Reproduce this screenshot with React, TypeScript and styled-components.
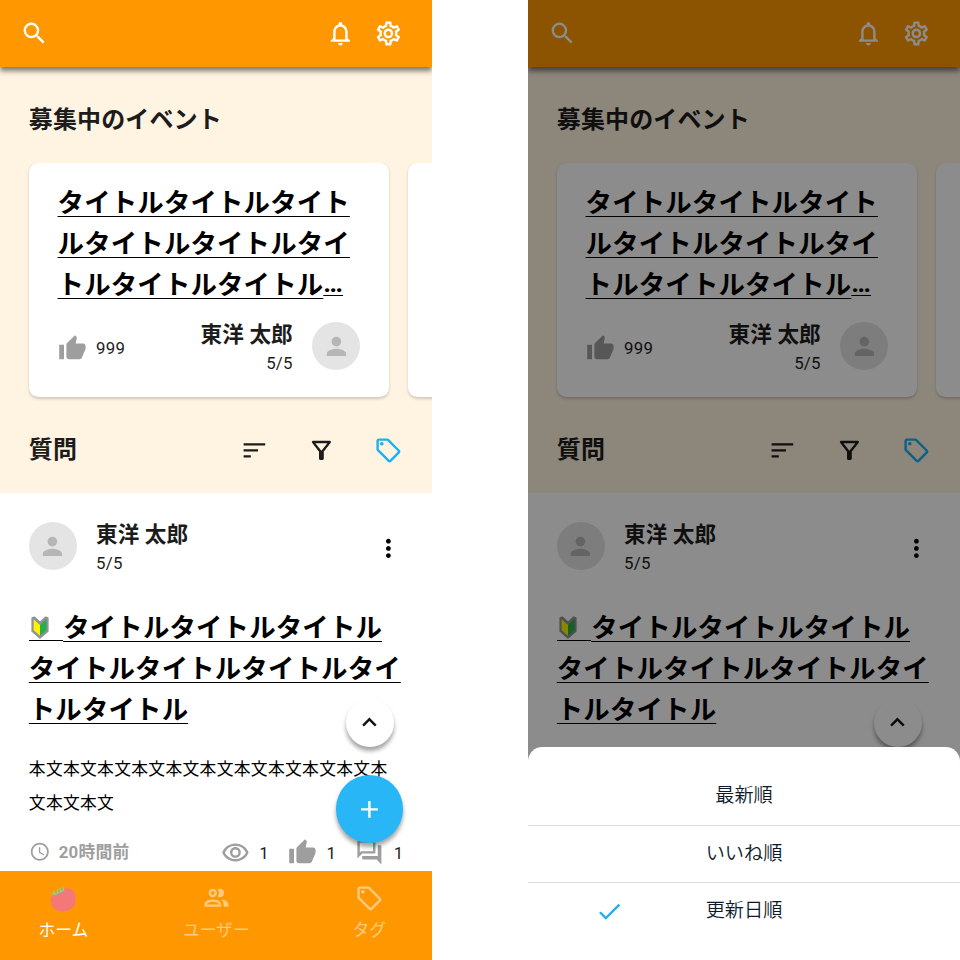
import React from 'react';
import styled, { createGlobalStyle } from 'styled-components';
import {
  MdSearch,
  MdNotificationsNone,
  MdOutlineSettings,
  MdThumbUp,
  MdPerson,
  MdSort,
  MdOutlineFilterAlt,
  MdMoreVert,
  MdAccessTime,
  MdOutlineRemoveRedEye,
  MdOutlineForum,
  MdKeyboardArrowUp,
  MdAdd,
  MdCheck,
} from 'react-icons/md';

const ICON = 28.8;

const GlobalStyle = createGlobalStyle`
  * { box-sizing: border-box; }
  body {
    margin: 0;
    background: #fff;
    font-family: Roboto, "Noto Sans CJK JP", sans-serif;
    color: #1c1c1c;
  }
  svg { display: block; flex: none; }
`;

const Board = styled.main`
  display: flex;
  justify-content: space-between;
  width: 960px;
  height: 960px;
  overflow: hidden;
`;

const Phone = styled.section`
  position: relative;
  display: flex;
  flex-direction: column;
  width: 432px;
  height: 960px;
  overflow: hidden;
  background: #fff;
`;

const AppBar = styled.header`
  position: relative;
  z-index: 1;
  display: flex;
  align-items: center;
  gap: 19.2px;
  flex: none;
  height: 67.4px;
  padding: 0 28.8px 0 19.6px;
  background: #ff9800;
  color: #fff;
  box-shadow: 0 4px 5px rgba(0, 0, 0, 0.5);
`;

const Spacer = styled.div`
  flex: 1;
`;

const Events = styled.section`
  flex: none;
  height: 425.6px;
  background: #fff4e1;
`;

const Heading = styled.h2`
  margin: 0;
  font-size: 24px;
  font-weight: 700;
  line-height: 36px;
  letter-spacing: 0.12px;
`;

const EventsHeading = styled(Heading)`
  padding: 35px 28.8px 24.8px;
`;

const CardRail = styled.div`
  display: flex;
  gap: 19.2px;
  padding-left: 28.8px;
  overflow: hidden;
  height: 240px;
`;

const Card = styled.article`
  flex: none;
  width: 360px;
  height: 234px;
  padding: 18px 0 0 28.8px;
  border-radius: 9.6px;
  background: #fff;
  box-shadow: 0 1.5px 3px rgba(0, 0, 0, 0.18);
`;

const Title = styled.h3`
  margin: 0;
  font-size: 26.4px;
  font-weight: 700;
  line-height: 40.8px;
  letter-spacing: 0.18px;
  color: #000;
`;

const TitleLine = styled.div`
  display: flex;
  height: 40.8px;
  white-space: nowrap;
`;

const Underlined = styled.span<{ $offset?: number }>`
  font-family: "Noto Sans CJK JP", sans-serif;
  text-decoration: underline;
  text-decoration-thickness: 1.3px;
  text-underline-offset: ${(p) => p.$offset ?? 4}px;
  text-decoration-skip-ink: none;
`;

const Ellipsis = styled(Underlined)`
  font-family: Roboto, sans-serif;
`;

const MarkSlot = styled.span`
  display: flex;
  align-items: flex-end;
  width: 34.4px;
  height: 34.6px;
  padding: 0 0 1px 2.6px;
  border-bottom: 1.2px solid #000;
`;

const CardFooter = styled.div`
  display: flex;
  align-items: center;
  height: 48px;
  margin-top: 18.4px;
  padding-right: 28.8px;
`;

const Stat = styled.span<{ $drop?: number }>`
  display: flex;
  align-items: center;
  gap: 9.6px;
  padding-top: ${(p) => p.$drop ?? 0}px;
  color: #9e9e9e;
`;

const Count = styled.span`
  font-size: 16.8px;
  line-height: 24px;
  letter-spacing: 0.3px;
  color: #1c1c1c;
`;

const Person = styled.div<{ $end?: boolean }>`
  display: flex;
  flex-direction: column;
  align-items: ${(p) => (p.$end ? 'flex-end' : 'flex-start')};
  padding-top: 4px;
  margin: ${(p) => (p.$end ? '0 19.2px 0 0' : '0 0 0 19.2px')};
`;

const Name = styled.span`
  font-size: 21.6px;
  font-weight: 700;
  line-height: 32px;
  letter-spacing: 0.1px;
`;

const PostDate = styled.span`
  font-size: 16.8px;
  line-height: 25px;
  letter-spacing: 0.3px;
`;

const Avatar = styled.span`
  display: flex;
  align-items: center;
  justify-content: center;
  flex: none;
  width: 48px;
  height: 48px;
  border-radius: 50%;
  background: #e4e4e4;
  color: #b6b6b6;
`;

const Tools = styled.div`
  display: flex;
  align-items: center;
  gap: 38.4px;
  height: 58px;
  margin-top: 18.2px;
  padding: 0 28.8px;
  color: #1c1c1c;
`;

const Post = styled.article`
  flex: none;
  height: 378px;
  padding: 29px 28.8px 0;
`;

const PostHeader = styled.div`
  display: flex;
  align-items: center;
  height: 48px;
  margin-bottom: 36.2px;
`;

const More = styled.span`
  margin: 4px 0 0 auto;
  color: #000;
`;

const Body = styled.p`
  width: 375px;
  margin: 24.4px 0 0;
  font-size: 16.8px;
  line-height: 33.6px;
  letter-spacing: 0.3px;
  color: #000;
`;

const Stats = styled.div`
  display: flex;
  align-items: center;
  gap: 19.2px;
  height: 34px;
  margin: 15.6px -0.4px 0 0;
`;

const Elapsed = styled.span`
  display: flex;
  align-items: center;
  gap: 8.4px;
  padding-bottom: 1px;
  font-size: 16.8px;
  font-weight: 700;
  line-height: 24px;
  letter-spacing: 0.2px;
  color: #9e9e9e;
`;

const Floating = styled.div`
  position: absolute;
  right: 28.8px;
  bottom: 117.4px;
  display: flex;
  flex-direction: column;
  align-items: center;
  gap: 28.8px;
`;

const RoundButton = styled.button<{ $primary?: boolean }>`
  display: flex;
  align-items: center;
  justify-content: center;
  width: ${(p) => (p.$primary ? 67.2 : 48)}px;
  height: ${(p) => (p.$primary ? 67.2 : 48)}px;
  padding: 0;
  border: 0;
  border-radius: 50%;
  background: ${(p) => (p.$primary ? '#29b6f6' : '#fff')};
  color: ${(p) => (p.$primary ? '#fff' : '#111')};
  box-shadow: 0 4px 4px rgba(0, 0, 0, 0.36);
`;

const TabBar = styled.nav`
  position: relative;
  display: grid;
  grid-template-columns: repeat(3, 126px);
  justify-content: space-between;
  flex: none;
  height: 89px;
  background: #ff9800;
`;

const Tab = styled.span<{ $active?: boolean }>`
  display: flex;
  flex-direction: column;
  align-items: center;
  gap: 4px;
  padding: 13px 0 0 0.6px;
  font-size: 16.8px;
  font-weight: 400;
  line-height: 26px;
  color: ${(p) => (p.$active ? '#fff' : '#ffca80')};
`;

const TabLabel = styled.span`
  padding-top: 0.6px;
`;

const Scrim = styled.div`
  position: absolute;
  inset: 0;
  z-index: 2;
  display: flex;
  flex-direction: column;
  justify-content: flex-end;
  background: rgba(0, 0, 0, 0.45);
`;

const Sheet = styled.ul`
  height: 212.6px;
  margin: 0;
  padding: 19.6px 0 0;
  list-style: none;
  border-radius: 14.4px 14.4px 0 0;
  background: #fff;
`;

const SheetRow = styled.li`
  display: grid;
  grid-template-columns: 163px 1fr 163px;
  align-items: center;
  height: 57.6px;
  font-family: "Noto Sans CJK JP", sans-serif;
  font-size: 19.2px;
  font-weight: 350;
  line-height: 28px;
  text-align: center;
  color: #0d1a2b;

  & + & {
    border-top: 1.2px solid #dcdcdc;
  }
`;

const SheetLabel = styled.span`
  padding-bottom: 4px;
`;

const CheckSlot = styled.span`
  display: flex;
  justify-content: center;
  color: #1ab0f5;
`;

const TagIcon = ({ color }: { color?: string }) => (
  <svg width={ICON} height={ICON} viewBox="0 0 24 24" fill={color ?? 'currentColor'}>
    <path d="M21.41 11.58l-9-9C12.05 2.22 11.55 2 11 2H4c-1.1 0-2 .9-2 2v7c0 .55.22 1.05.59 1.42l9 9c.36.36.86.58 1.41.58s1.05-.22 1.41-.59l7-7c.37-.36.59-.86.59-1.41s-.23-1.06-.59-1.42zM13 20.01L4 11V4h7v-.01l9 9-7 7.02z" />
    <circle cx="6.5" cy="6.5" r="1.5" />
  </svg>
);

const UsersIcon = () => (
  <svg width={ICON} height={ICON} viewBox="0 0 24 24" fill="currentColor">
    <path d="M13.07 10.41A5 5 0 0 0 13.07 4.59A3.39 3.39 0 0 1 15 4A3.5 3.5 0 0 1 15 11A3.39 3.39 0 0 1 13.07 10.41M5.5 7.5A3.5 3.5 0 1 1 9 11A3.5 3.5 0 0 1 5.5 7.5M7.5 7.5A1.5 1.5 0 1 0 9 6A1.5 1.5 0 0 0 7.5 7.5M16 17V19H2V17S2 13 9 13 16 17 16 17M14 17C13.86 16.22 12.67 15 9 15S4.07 16.31 4 17M15.95 13A5.32 5.32 0 0 1 18 17V19H22V17S22 13.37 15.94 13Z" />
  </svg>
);

const FruitIcon = () => (
  <svg width={ICON} height={ICON} viewBox="0 0 28.8 28.8">
    <path
      d="M2.600 12.600C5 9.600 9.600 8.600 13.500 5.800c3-2.100 7.800-2 10.400.7 2.200 2.400 3.100 6.600 2.800 10.300-.4 5.800-5.500 10.700-12 10.800C8.700 27.700 3 24.700 2 18.600c-.4-2.300-.4-4.600.6-6z"
      fill="#f47878"
    />
    <path
      d="M3.300 9.600l3.200.9 3-1.700M4.200 7.400l2.500 3M8.300 5.600l.2 3.600M8.500 9l4-1.600M10.800 4.200l1.300 3.500M12 7.500l2.800-1.600M13.800 3.200l.8 3"
      fill="none"
      stroke="#75dda0"
      strokeWidth="1.1"
      strokeLinecap="round"
    />
  </svg>
);

const BeginnerMark = () => (
  <svg width="18" height="23" viewBox="0 0 18 23">
    <path d="M1.200 1.900L3.300 1.200 9 6.500l5.700-5.300 2.100.7v13.300L9 22l-7.800-6.800z" fill="#8f9296" stroke="#8f9296" strokeWidth="1.600" strokeLinejoin="round" />
    <path d="M2.600 3.300L9 9v10.800l-6.400-5.600z" fill="#fff200" />
    <path d="M15.400 3.300L9 9v10.800l6.400-5.600z" fill="#22b14c" />
  </svg>
);

const UserAvatar = () => (
  <Avatar>
    <MdPerson size={ICON} />
  </Avatar>
);

const EVENT_LINES = ['タイトルタイトルタイト', 'ルタイトルタイトルタイ', 'トルタイトルタイトル'];
const POST_LINES = ['タイトルタイトルタイトル', 'タイトルタイトルタイトルタイ', 'トルタイトル'];

const EventCard = () => (
  <Card>
    <Title>
      {EVENT_LINES.map((line, i) => (
        <TitleLine key={line}>
          <Underlined>{line}</Underlined>
          {i === EVENT_LINES.length - 1 && <Ellipsis $offset={3}>…</Ellipsis>}
        </TitleLine>
      ))}
    </Title>
    <CardFooter>
      <Stat $drop={4}>
        <MdThumbUp size={ICON} />
        <Count>999</Count>
      </Stat>
      <Spacer />
      <Person $end>
        <Name>東洋 太郎</Name>
        <PostDate>5/5</PostDate>
      </Person>
      <UserAvatar />
    </CardFooter>
  </Card>
);

const QuestionPost = () => (
  <Post>
    <PostHeader>
      <UserAvatar />
      <Person>
        <Name>東洋 太郎</Name>
        <PostDate>5/5</PostDate>
      </Person>
      <More>
        <MdMoreVert size={ICON} />
      </More>
    </PostHeader>
    <Title>
      {POST_LINES.map((line, i) => (
        <TitleLine key={line}>
          {i === 0 && (
            <MarkSlot>
              <BeginnerMark />
            </MarkSlot>
          )}
          <Underlined>{line}</Underlined>
        </TitleLine>
      ))}
    </Title>
    <Body>本文本文本文本文本文本文本文本文本文本文本文本文本文</Body>
    <Stats>
      <Elapsed>
        <MdAccessTime size={21.6} />
        20時間前
      </Elapsed>
      <Spacer />
      <Stat>
        <MdOutlineRemoveRedEye size={ICON} />
        <Count>1</Count>
      </Stat>
      <Stat>
        <MdThumbUp size={ICON} />
        <Count>1</Count>
      </Stat>
      <Stat>
        <MdOutlineForum size={ICON} />
        <Count>1</Count>
      </Stat>
    </Stats>
  </Post>
);

const SORT_OPTIONS = ['最新順', 'いいね順', '更新日順'];

const SortSheet = ({ selected }: { selected: string }) => (
  <Scrim>
    <Sheet>
      {SORT_OPTIONS.map((label) => (
        <SheetRow key={label}>
          <CheckSlot>{label === selected && <MdCheck size={ICON} />}</CheckSlot>
          <SheetLabel>{label}</SheetLabel>
        </SheetRow>
      ))}
    </Sheet>
  </Scrim>
);

const HomeScreen = ({ sheet }: { sheet?: boolean }) => (
  <Phone>
    <AppBar>
      <MdSearch size={ICON} />
      <Spacer />
      <MdNotificationsNone size={ICON} />
      <MdOutlineSettings size={ICON} />
    </AppBar>
    <Events>
      <EventsHeading>募集中のイベント</EventsHeading>
      <CardRail>
        <EventCard />
        <Card />
      </CardRail>
      <Tools>
        <Heading>質問</Heading>
        <Spacer />
        <MdSort size={ICON} />
        <MdOutlineFilterAlt size={ICON} />
        <TagIcon color="#1ab0f5" />
      </Tools>
    </Events>
    <QuestionPost />
    <Floating>
      <RoundButton>
        <MdKeyboardArrowUp size={ICON} />
      </RoundButton>
      <RoundButton $primary>
        <MdAdd size={ICON} />
      </RoundButton>
    </Floating>
    <TabBar>
      <Tab $active>
        <FruitIcon />
        <TabLabel>ホーム</TabLabel>
      </Tab>
      <Tab>
        <UsersIcon />
        <TabLabel>ユーザー</TabLabel>
      </Tab>
      <Tab>
        <TagIcon />
        <TabLabel>タグ</TabLabel>
      </Tab>
    </TabBar>
    {sheet && <SortSheet selected="更新日順" />}
  </Phone>
);

export default function App() {
  return (
    <>
      <GlobalStyle />
      <Board>
        <HomeScreen />
        <HomeScreen sheet />
      </Board>
    </>
  );
}
